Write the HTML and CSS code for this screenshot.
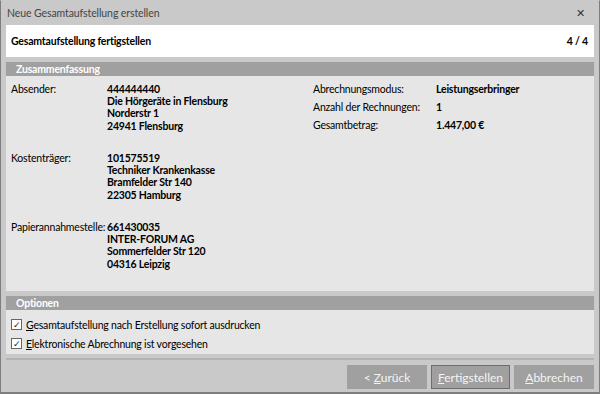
FILE: index.html
```html
<!DOCTYPE html>
<html>
<head>
    <title>Neue Gesamtaufstellung erstellen</title>
    <link rel="stylesheet" href="styles.css">
</head>
<body>
    <div class="window">
        <div class="titlebar">
            <span class="title">Neue Gesamtaufstellung erstellen</span>
            <span class="close">&#x2715;</span>
        </div>

        <div class="header">
            <span>Gesamtaufstellung fertigstellen</span>
            <span>4 / 4</span>
        </div>

        <!-- Zusammenfassung -->
        <div class="section-title">Zusammenfassung</div>
        <div class="summary">
            <div class="col-left">
                <div class="entry">
                    <div class="label">Absender:</div>
                    <div class="value">444444440<br>Die Hörgeräte in Flensburg<br>Norderstr 1<br>24941 Flensburg</div>
                </div>
                <div class="entry">
                    <div class="label">Kostenträger:</div>
                    <div class="value">101575519<br>Techniker Krankenkasse<br>Bramfelder Str 140<br>22305 Hamburg</div>
                </div>
                <div class="entry">
                    <div class="label">Papierannahmestelle:</div>
                    <div class="value">661430035<br>INTER-FORUM AG<br>Sommerfelder Str 120<br>04316 Leipzig</div>
                </div>
            </div>
            <div class="col-right">
                <div class="label">Abrechnungsmodus:</div>
                <div class="value">Leistungserbringer</div>
                <div class="label">Anzahl der Rechnungen:</div>
                <div class="value">1</div>
                <div class="label">Gesamtbetrag:</div>
                <div class="value">1.447,00 €</div>
            </div>
        </div>

        <!-- Optionen -->
        <div class="section-title">Optionen</div>
        <div class="options">
            <label class="option"><span class="check">&#x2713;</span><span><u>G</u>esamtaufstellung nach Erstellung sofort ausdrucken</span></label>
            <label class="option"><span class="check">&#x2713;</span><span><u>E</u>lektronische Abrechnung ist vorgesehen</span></label>
        </div>

        <div class="separator"></div>

        <div class="buttons">
            <button class="button">&lt; <u>Z</u>urück</button>
            <button class="button focused"><u>F</u>ertigstellen</button>
            <button class="button"><u>A</u>bbrechen</button>
        </div>
    </div>
</body>
</html>
```

FILE: styles.css
```css
body {
    margin: 0;
    font-family: "Lato", "Open Sans", sans-serif;
    font-size: 10.5px;
    letter-spacing: -0.2px;
    color: #000;
}

.window {
    width: 600px;
    height: 394px;
    box-sizing: border-box;
    background-color: #c9c9c9;
    border: 1px solid #7d7d7d;
    border-top-color: #c9c9c9;
    border-bottom-width: 2px;
    padding: 0 5px;
    display: flex;
    flex-direction: column;
}

/* title bar */
.titlebar {
    height: 24px;
    display: flex;
    align-items: center;
    justify-content: space-between;
    padding: 0 1px;
}

.title {
    color: #444;
    font-size: 10.5px;
    letter-spacing: -0.1px;
}

.close {
    color: #333;
    font-size: 11px;
    margin-right: 8px;
}

.header {
    height: 32px;
    background-color: #fff;
    display: flex;
    align-items: center;
    justify-content: space-between;
    padding: 0 6px 0 5px;
    font-weight: bold;
}

.section-title {
    margin-top: 5px;
    height: 14px;
    line-height: 14px;
    background-color: #a0a0a0;
    color: #fff;
    font-weight: bold;
    padding-left: 10px;
}

/* summary */
.summary {
    background-color: #e6e6e6;
    height: 215px;
    display: flex;
    padding: 7px 5px 0 5px;
    box-sizing: border-box;
}

.col-left {
    width: 302px;
}

.entry {
    display: flex;
    margin-bottom: 20.2px;
}

.entry .label {
    width: 96px;
}

.value {
    font-weight: bold;
    line-height: 12.2px;
}

.label {
    line-height: 12.2px;
}

.col-right {
    display: grid;
    grid-template-columns: 123px auto;
    row-gap: 6px;
    align-content: start;
}

/* options */
.options {
    background-color: #e6e6e6;
    height: 44px;
    padding: 5px 4px 0 5px;
    box-sizing: border-box;
}

.option {
    display: flex;
    align-items: center;
    height: 19px;
}

.check {
    width: 9px;
    height: 9px;
    border: 1px solid #666;
    background-color: #fff;
    font-size: 9px;
    line-height: 9px;
    text-align: center;
    margin-right: 4px;
    color: #222;
}

.separator {
    margin-top: 4px;
    height: 2px;
    background-color: #b3b3b3;
}

/* buttons */
.buttons {
    display: flex;
    justify-content: flex-end;
    gap: 4px;
    margin-top: 5px;
}

.button {
    width: 80px;
    height: 24px;
    background-color: #a0a0a0;
    color: #f4f4f4;
    border: 1px solid #a0a0a0;
    font-family: "Lato", "Open Sans", sans-serif;
    font-size: 12px;
    padding: 0;
}

.focused {
    border-color: #6e6e6e;
    width: 79px;
}
```
